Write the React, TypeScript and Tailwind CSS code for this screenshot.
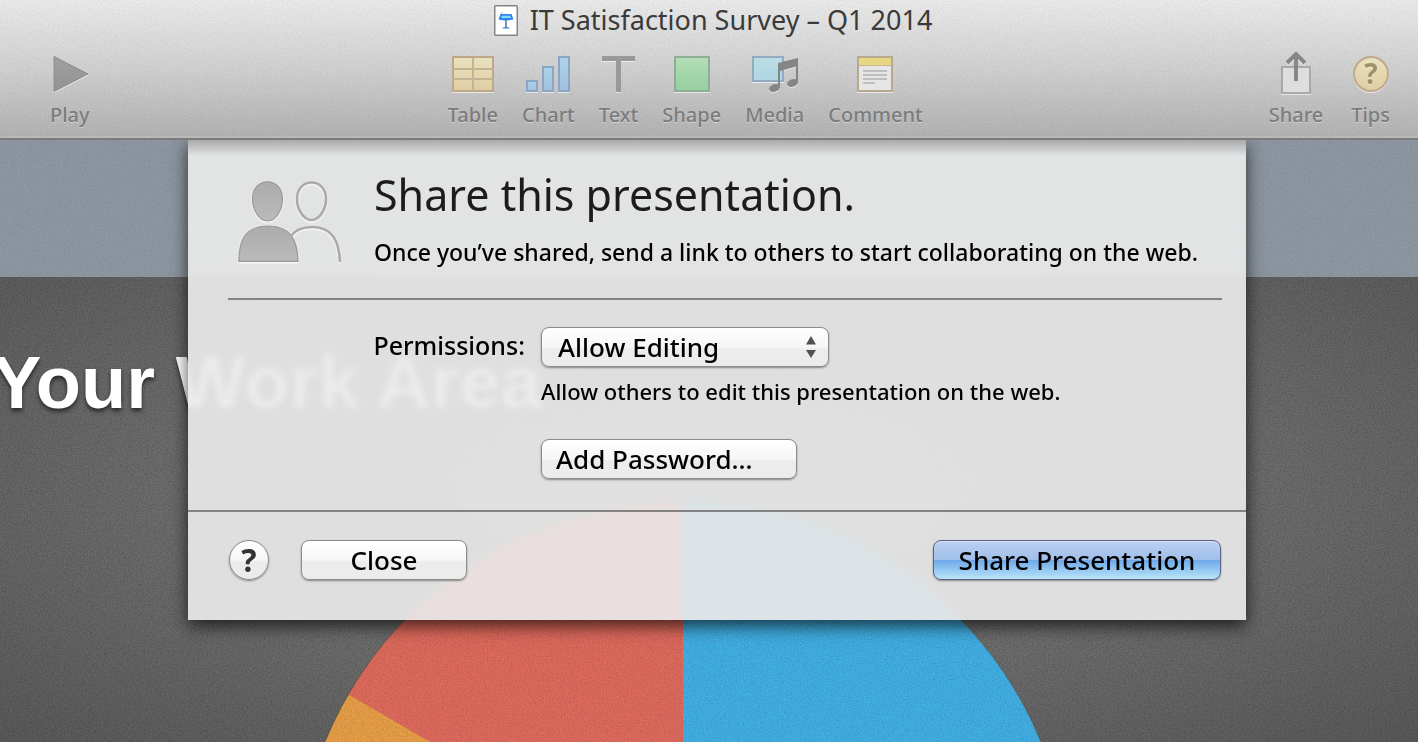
import { useState } from 'react';
import type { ReactNode } from 'react';

const permissions = [
  { value: 'edit', label: 'Allow Editing', hint: 'Allow others to edit this presentation on the web.' },
  { value: 'view', label: 'View Only', hint: 'Allow others to view this presentation on the web.' },
];

type ToolProps = {
  label: string;
  width: number;
  children: ReactNode;
};

function Tool({ label, width, children }: ToolProps) {
  return (
    <button
      type="button"
      className="flex flex-col items-center text-xl leading-7 font-medium text-[#7c7c7c] [text-shadow:0_1px_0_rgba(255,255,255,0.4)]"
    >
      <svg
        width={width}
        height="50"
        viewBox={`0 0 ${width} 50`}
        className="drop-shadow-[0_1px_0_rgba(255,255,255,0.6)]"
        aria-hidden="true"
      >
        {children}
      </svg>
      {label}
    </button>
  );
}

function Gradients() {
  return (
    <svg width="0" height="0" className="absolute" aria-hidden="true">
      <defs>
        <linearGradient id="sand" x1="0" y1="0" x2="0" y2="1">
          <stop offset="0" stopColor="#e9e2bf" />
          <stop offset="1" stopColor="#dfcda2" />
        </linearGradient>
        <linearGradient id="sky" x1="0" y1="0" x2="0" y2="1">
          <stop offset="0" stopColor="#abd5e8" />
          <stop offset="1" stopColor="#a3bfde" />
        </linearGradient>
        <linearGradient id="mint" x1="0" y1="0" x2="0" y2="1">
          <stop offset="0" stopColor="#b3dfb7" />
          <stop offset="1" stopColor="#97cea0" />
        </linearGradient>
        <linearGradient id="photo" x1="0" y1="0" x2="0" y2="1">
          <stop offset="0" stopColor="#bbdde3" />
          <stop offset="1" stopColor="#b0d6e3" />
        </linearGradient>
        <linearGradient id="steel" x1="0" y1="0" x2="0" y2="1">
          <stop offset="0" stopColor="#a0a0a0" />
          <stop offset="1" stopColor="#929292" />
        </linearGradient>
        <linearGradient id="person" x1="0" y1="0" x2="0" y2="1">
          <stop offset="0" stopColor="#acacac" />
          <stop offset="1" stopColor="#bababa" />
        </linearGradient>
        <filter id="grain" x="0" y="0" width="100%" height="100%">
          <feTurbulence type="fractalNoise" baseFrequency="0.7" numOctaves="2" seed="4" />
          <feColorMatrix values="0 0 0 0 0  0 0 0 0 0  0 0 0 0 0  1.4 0 0 0 -0.5" />
        </filter>
      </defs>
    </svg>
  );
}

function Grain({ className }: { className: string }) {
  return (
    <svg className={`pointer-events-none absolute inset-0 h-full w-full ${className}`} aria-hidden="true">
      <rect width="100%" height="100%" filter="url(#grain)" />
    </svg>
  );
}

function DocumentIcon() {
  return (
    <svg width="24" height="31" viewBox="0 0 24 31" aria-hidden="true">
      <rect x="0.75" y="0.75" width="22.5" height="29.5" rx="0.8" fill="#fff" stroke="#858585" strokeWidth="1.5" />
      <path d="M6.500 9h11l2 5.500q-7.500 1.800-15 0z" fill="#2c84ee" />
      <path d="M7.800 10.700h8.400l.9 2.300H7z" fill="#83dcf2" />
      <path d="M7 9 8.500 7" stroke="#9bb7d8" strokeWidth="1" />
      <path d="M12 15v7" stroke="#56749f" strokeWidth="1.600" />
      <path d="M8.400 23.400q0-1.500 3.600-1.500t3.600 1.500z" fill="#3b77cf" />
    </svg>
  );
}

function Toolbar() {
  return (
    <header className="relative z-20 border-b-2 border-[#7b7b7b] bg-linear-to-b from-[#ebebeb] via-[#d1d1d1] to-[#b2b2b2] shadow-[inset_0_-2px_0_#bcbcbc]">
      <Grain className="opacity-8" />
      <div className="relative">
        <h1 className="flex h-10 items-center justify-center gap-3 pl-2 text-[27px] text-[#3a3a3a]">
          <DocumentIcon />
          IT Satisfaction Survey – Q1 2014
        </h1>
        <div className="flex justify-between pt-[11px] pr-7 pb-[9px] pl-[50px]">
          <Tool label="Play" width={36}>
            <path d="M2 5.500v35L36 23z" fill="url(#steel)" stroke="#8a8a8a" />
          </Tool>
          <div className="flex gap-6 pl-3">
            <Tool label="Table" width={42}>
              <rect x="1" y="6" width="40" height="34" fill="url(#sand)" stroke="#bfa88a" strokeWidth="2" />
              <path d="M21 6v34M1 18h40M1 28h40" stroke="#c6b294" strokeWidth="2" />
            </Tool>
            <Tool label="Chart" width={44}>
              <g fill="url(#sky)" stroke="#8ba6c4" strokeWidth="2">
                <rect x="1" y="30" width="10" height="10" />
                <rect x="17" y="16" width="10" height="24" />
                <rect x="33" y="6" width="10" height="34" />
              </g>
            </Tool>
            <Tool label="Text" width={33}>
              <path d="M0 5h33v5H19v31h-5V10H0z" fill="#999" />
            </Tool>
            <Tool label="Shape" width={36}>
              <rect x="1" y="6" width="34" height="34" fill="url(#mint)" stroke="#8fac95" strokeWidth="2" />
            </Tool>
            <Tool label="Media" width={46}>
              <rect x="1" y="6" width="30" height="24" fill="url(#photo)" stroke="#94a9c2" strokeWidth="2" />
              <path d="M26 12 46 7v8L28 20v17h-2z" fill="#858585" />
              <path d="M44 10h2v22h-2z" fill="#858585" />
              <ellipse cx="22.500" cy="37" rx="5.500" ry="3.800" fill="#858585" transform="rotate(-18 22.500 37)" />
              <ellipse cx="40.500" cy="32" rx="5.500" ry="3.800" fill="#858585" transform="rotate(-18 40.500 32)" />
            </Tool>
            <Tool label="Comment" width={36}>
              <rect x="1" y="6" width="34" height="34" fill="#e6e6e6" stroke="#b5a990" strokeWidth="2" />
              <path d="M2 7h32v7H2z" fill="#e7d784" />
              <path d="M2 14.500h32" stroke="#c5b68c" />
              <path d="M6 20h24M6 24h24M6 28h24M6 32h12" stroke="#bebebe" strokeWidth="2" />
            </Tool>
          </div>
          <div className="flex gap-7">
            <Tool label="Share" width={30}>
              <rect x="1" y="16" width="28" height="26" fill="#dedede" stroke="#a9a9a9" strokeWidth="2" />
              <path d="M15 30V4M6 12l9-9 9 9" fill="none" stroke="#878787" strokeWidth="4" />
            </Tool>
            <Tool label="Tips" width={36}>
              <circle cx="18" cy="23" r="17" fill="url(#sand)" stroke="#bfa98b" strokeWidth="2" />
              <text x="18" y="33" textAnchor="middle" fontSize="28" fontWeight="700" fill="#9f916d">
                ?
              </text>
            </Tool>
          </div>
        </div>
      </div>
    </header>
  );
}

function Slide() {
  return (
    <div className="relative col-start-1 row-start-1 flex flex-col overflow-hidden bg-[#8e97a2]">
      <Grain className="opacity-10" />
      <section className="relative mt-[137px] h-0 grow bg-[radial-gradient(ellipse_at_50%_45%,#7a7a7a_0%,#6e6e6e_55%,#5a5a5a_100%)]">
        <Grain className="opacity-28" />
        <h2 className="relative -ml-2 pt-[66px] font-['Liberation_Sans',sans-serif] text-[74px] leading-20 font-bold whitespace-nowrap text-white [text-shadow:0_3px_4px_rgba(0,0,0,0.6)]">
          Your Work Area
        </h2>
        {/* survey results pie */}
        <div className="relative flex justify-center pt-[78px] pr-13">
          <svg width="776" height="776" viewBox="-388 -388 776 776" className="shrink-0" role="img" aria-label="Pie chart">
            <circle r="387" fill="#e89f48" />
            <path d="M0 0V-387A387 387 0 0 0-334.600-194.500z" fill="#df6b5d" />
            <path d="M0 0V-387A387 387 0 0 1 334.600 194.500z" fill="#42b0e5" />
            <clipPath id="disc">
              <circle r="387" />
            </clipPath>
            <g clipPath="url(#disc)" opacity="0.2">
              <rect x="-388" y="-388" width="776" height="776" filter="url(#grain)" />
            </g>
            <circle r="387" fill="none" stroke="#000" strokeOpacity="0.25" />
          </svg>
        </div>
      </section>
    </div>
  );
}

function PeopleIcon() {
  return (
    <svg
      width="104"
      height="82"
      viewBox="0 0 104 82"
      className="shrink-0 drop-shadow-[0_1px_1px_#fff]"
      aria-hidden="true"
    >
      <g stroke="#999" strokeWidth="1.200" fill="url(#person)">
        <path d="M29.500.8C38 .8 44.500 7.500 44.500 18c0 10-6 22-15 22s-15-12-15-22C14.500 7.500 21 .8 29.500.8z" />
        <path d="M.8 80.400C1 58 8 45 30 45S59.500 58 60 80.400z" />
      </g>
      <g fill="none" stroke="#aaa" strokeWidth="2.600">
        <path d="M73.500 1.500C82 1.500 88 8 88 18c0 9.500-6 21-14.500 21S59 27.500 59 18C59 8 65 1.500 73.500 1.500z" />
        <path d="M52.500 55.500C57 49 64 46 74 46c20 0 27 13 28 35" />
      </g>
    </svg>
  );
}

const pushButton =
  'h-10 rounded-lg border border-[#8b8b8b] bg-linear-to-b from-white from-0% via-[#f6f6f6] via-50% to-[#ececec] to-55% text-[26px] leading-9 font-medium text-black shadow-[0_1px_2px_rgba(0,0,0,0.4)]';

function ShareSheet() {
  const [permission, setPermission] = useState('edit');
  const current = permissions.find((p) => p.value === permission);

  return (
    <div className="z-10 col-start-1 row-start-1 flex items-start justify-center pl-4">
      <section
        role="dialog"
        aria-labelledby="sheet-title"
        className="relative w-full max-w-[1058px] bg-[#e9e9e9]/92 shadow-[0_6px_16px_rgba(0,0,0,0.7)] backdrop-blur-[3px]"
      >
        <div className="absolute inset-x-0 top-0 h-4 bg-linear-to-b from-black/25 to-transparent" />
        <div className="flex gap-8 pt-7 pr-6 pl-[50px]">
          <div className="pt-[13px]">
            <PeopleIcon />
          </div>
          <div className="pb-7">
            <h2 id="sheet-title" className="text-[43px] leading-[54px] text-[#1c1c1c]">
              Share this presentation.
            </h2>
            <p className="mt-3 text-[23px] leading-9 font-medium text-black">
              Once you’ve shared, send a link to others to start collaborating on the web.
            </p>
          </div>
        </div>
        <hr className="mr-6 ml-10 border-t-2 border-[#838383]" />

        <div className="grid grid-cols-[297px_1fr] gap-x-4 pt-[27px] pb-[31px] pl-10 text-black">
          <label htmlFor="permission" className="text-right text-[25px] leading-9 font-medium">
            Permissions:
          </label>
          <div>
            <div className="relative w-72">
              <select
                id="permission"
                value={permission}
                onChange={(e) => setPermission(e.target.value)}
                className={`${pushButton} w-full appearance-none pl-4`}
              >
                {permissions.map((p) => (
                  <option key={p.value} value={p.value}>
                    {p.label}
                  </option>
                ))}
              </select>
              <svg
                width="10"
                height="22"
                viewBox="0 0 10 22"
                className="pointer-events-none absolute top-[9px] right-[13px]"
                aria-hidden="true"
              >
                <path d="M5 0 10 8.500H0zM0 14h10L5 22z" fill="#505050" />
              </svg>
            </div>
            <p className="mt-2 text-[22px] leading-8 font-medium">{current?.hint}</p>
            <button type="button" className={`${pushButton} mt-8 w-64 pl-3.5 text-left`}>
              Add Password…
            </button>
          </div>
        </div>

        <div className="flex items-center gap-8 border-t-2 border-[#838383] pt-7 pr-[25px] pb-10 pl-[41px]">
          <button
            type="button"
            aria-label="Help"
            className="size-10 rounded-full border border-[#8b8b8b] bg-linear-to-b from-white via-[#f6f6f6] via-50% to-[#ebebeb] to-55% text-[32px] leading-9 font-bold text-[#333] shadow-[0_1px_2px_rgba(0,0,0,0.4)]"
          >
            ?
          </button>
          <button type="button" className={`${pushButton} w-[166px]`}>
            Close
          </button>
          <button
            type="button"
            className="ml-auto h-10 w-72 rounded-lg border border-[#5b6088] bg-[linear-gradient(#bccff0,#a0bfea_49%,#6fa9ea_51%,#b9e4f8)] text-[26px] leading-9 font-medium text-black shadow-[0_1px_2px_rgba(0,0,0,0.4),inset_0_1px_1px_rgba(255,255,255,0.5)]"
          >
            Share Presentation
          </button>
        </div>
      </section>
    </div>
  );
}

export default function App() {
  return (
    <div className="flex h-screen flex-col overflow-hidden font-['Noto_Sans','Open_Sans',sans-serif]">
      <Gradients />
      <Toolbar />
      <main className="grid grow grid-cols-1">
        <Slide />
        <ShareSheet />
      </main>
    </div>
  );
}
